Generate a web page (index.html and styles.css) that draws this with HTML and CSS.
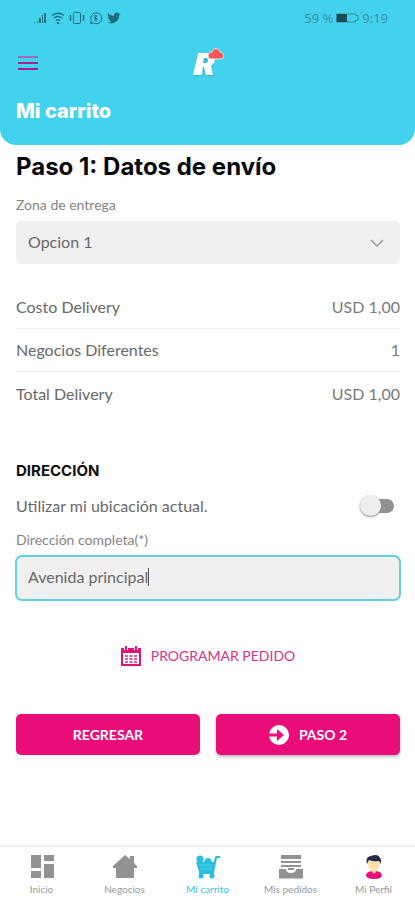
FILE: index.html
```html
<!DOCTYPE html>
<html lang="es">
<head>
<meta charset="utf-8">
<meta name="viewport" content="width=device-width, initial-scale=1">
<title>Mi carrito</title>
<link rel="stylesheet" href="styles.css">
</head>
<body>
<div class="app">
  <header class="header">
    <div class="status">
      <div class="status-icons">
        <svg width="14" height="14" viewBox="0 0 14 14" fill="currentColor"><path d="M1 11h1v1H1zM4 10h1v2H4zM6 7h2v5H6zM9 4h1v8H9zM11 2h2v10h-2z"/></svg>
        <svg width="14" height="14" viewBox="0 0 14 14" fill="none" stroke="currentColor"><path d="M1 4.500Q7 0 13 4.500M3 7q4-3 8 0M5 9.500q2-1.500 4 0" stroke-width="1.300"/><path d="M6 11h2v2H6zM10 11h2" fill="currentColor" stroke="none"/></svg>
        <svg width="16" height="14" viewBox="0 0 16 14" fill="none" stroke="currentColor"><rect x="4.500" y="1.500" width="7" height="11" rx="1"/><path d="M1.500 4v6M14.500 4v6" stroke-width="1.500"/></svg>
        <svg width="14" height="14" viewBox="0 0 14 14" fill="none" stroke="currentColor"><path d="M1.500 12.500l.8-3A5.500 5.500 0 1 1 4.500 12z"/><path d="M6 4v6M6 4.500h1.500q1 1-1.500 2.300 3.500.7 1.500 2.700H6"/></svg>
        <svg width="14" height="14" viewBox="0 0 24 24" fill="currentColor"><path d="M23.500 5c-.8.400-1.700.6-2.700.8 1-.6 1.700-1.500 2-2.600-.9.500-1.900.9-3 1.100a4.700 4.700 0 0 0-8 4.300C7.900 8.400 4.400 6.500 2 3.600a4.700 4.700 0 0 0 1.500 6.300c-.8 0-1.500-.2-2.100-.6 0 2.300 1.600 4.200 3.800 4.700-.7.200-1.400.2-2.100.1.600 1.900 2.300 3.200 4.400 3.300A9.500 9.500 0 0 1 .5 19.300C9 24.500 21 19 21 7.400c1-.7 1.800-1.500 2.500-2.400z"/></svg>
      </div>
      <div class="status-info">
        <span>59 %</span>
        <svg width="23" height="10" viewBox="0 0 23 10"><path d="M.5 1h19v1.500H22v5h-2.500V9H.5z" fill="none" stroke="#368ca0"/><path d="M1 1h10v8H1z" fill="#164d57"/></svg>
        <span>9:19</span>
      </div>
    </div>
    <div class="toolbar">
      <button class="menu" type="button" aria-label="Menú">
        <svg width="20" height="16" viewBox="0 0 20 16" stroke-width="2"><path d="M0 2h20" stroke="#9a6fb5"/><path d="M0 8h20M0 14h20" stroke="#a8208e"/></svg>
      </button>
      <svg class="logo" width="34" height="34" viewBox="0 0 34 34" role="img" aria-label="R">
        <path d="M6 8h13q7 1 5 8-1 4-4 5l3 9h-7l-2-8-2 8H2z" fill="#249db5" opacity=".5"/>
        <path d="M7 7h12c6 0 7 10 1 13l2 9h-7l-2-8h-1l-1 8H2zM13 12l-1 5h2q3 0 3-3 0-2-2-2z" fill="#fff" fill-rule="evenodd"/>
        <path d="M17 10c0-3 2-4 4-4 1-5 7-4 8 0 4 0 5 7 1 7H20q-3 0-3-3z" fill="#ff5558" stroke="#d3eef0"/>
      </svg>
    </div>
    <h1 class="title">Mi carrito</h1>
  </header>

  <main class="content">
    <h2 class="step">Paso 1: Datos de envío</h2>
    <label class="label" for="zona">Zona de entrega</label>
    <div class="select-wrap">
      <select class="select" id="zona"><option>Opcion 1</option></select>
      <svg class="chevron" width="14" height="8" viewBox="0 0 14 8" fill="none" stroke="#999" stroke-width="1.500"><path d="M1 1l6 6 6-6"/></svg>
    </div>

    <dl class="costs">
      <div class="cost"><dt>Costo Delivery</dt><dd>USD 1,00</dd></div>
      <div class="cost"><dt>Negocios Diferentes</dt><dd>1</dd></div>
      <div class="cost"><dt>Total Delivery</dt><dd>USD 1,00</dd></div>
    </dl>

    <h3 class="section">DIRECCIÓN</h3>
    <div class="location">
      <label for="ubicacion">Utilizar mi ubicación actual.</label>
      <input class="switch" id="ubicacion" type="checkbox" role="switch">
    </div>
    <label class="label" for="direccion">Dirección completa(*)</label>
    <div class="field">
      <input class="field-input" id="direccion" type="text" value="Avenida principal">
      <span class="caret"></span>
    </div>

    <button class="schedule" type="button">
      <svg width="20" height="20" viewBox="0 0 20 20"><path d="M1 3h18v16H1z" fill="none" stroke="#d91678" stroke-width="2"/><path d="M0 2h20v5H0z" fill="#d91678"/><path d="M5 0v4M15 0v4" stroke="#fff" stroke-width="4"/><path d="M5 0v4M15 0v4" stroke="#d91678" stroke-width="2"/><path d="M4 9h3v2H4zM8.500 9h3v2h-3zM13 9h3v2h-3zM4 12h3v2H4zM8.500 12h3v2h-3zM13 12h3v2h-3zM4 15h3v2H4zM8.500 15h3v2h-3zM13 15h3v2h-3z" fill="#e45c9f"/></svg>
      <span>PROGRAMAR PEDIDO</span>
    </button>

    <div class="actions">
      <button class="btn" type="button">REGRESAR</button>
      <button class="btn btn-raised" type="button">
        <svg width="20" height="20" viewBox="0 0 20 20"><circle cx="10" cy="10" r="10" fill="#fff"/><path d="M0 8.500h8V4l7 6-7 6v-4.500H0z" fill="#e90c79"/></svg>
        <span>PASO 2</span>
      </button>
    </div>
  </main>

  <nav class="tabs">
    <a class="tab" href="#inicio">
      <svg width="24" height="24" viewBox="0 0 24 24" fill="#929292"><path d="M1 0h10v13H1zM14 0h10v6H14zM1 16h10v7H1zM14 9h10v14H14z"/></svg>
      <span>Inicio</span>
    </a>
    <a class="tab" href="#negocios">
      <svg width="24" height="24" viewBox="0 0 24 24" fill="#929292"><path d="M12 0l5 4V1h4v7l3 3v2h-3v10H3V13H0v-2z"/></svg>
      <span>Negocios</span>
    </a>
    <a class="tab tab-active" href="#carrito">
      <svg width="24" height="24" viewBox="0 0 24 24" fill="#27bfdc"><circle cx="4" cy="4" r="3.500"/><path d="M8 7q1-4 4-4t4 4zM0 7h18l1-5q.3-1 1.500-1H24v2h-3l-3 14H3zM3 17h15v2H3z"/><circle cx="5" cy="21" r="2.500"/><circle cx="16" cy="21" r="2.500"/><path d="M3 10h14M4 14h12" stroke="#6cd5e8" stroke-width=".7"/></svg>
      <span>Mi carrito</span>
    </a>
    <a class="tab" href="#pedidos">
      <svg width="24" height="24" viewBox="0 0 24 24" fill="#929292"><path d="M2 0h20v4H2zM2 6h20v2H2zM2 10h20v2H2zM0 14h7q0 4 5 4t5-4h7v9.500H0zM9 13h6v2H9z"/></svg>
      <span>Mis pedidos</span>
    </a>
    <a class="tab" href="#perfil">
      <svg width="24" height="24" viewBox="0 0 24 24"><path d="M4 20q1-4 8-4t8 4q0 4-8 4t-8-4z" fill="#e90c79"/><path d="M10 13h4v4q-2 3-4 0z" fill="#efc994"/><ellipse cx="12" cy="9" rx="6" ry="7" fill="#ffe1ad"/><path d="M5 9Q3 2 9 1q8-3 10 4v4l-2-3q-6 1-10-1z" fill="#252b4d"/></svg>
      <span>Mi Perfil</span>
    </a>
  </nav>
</div>
</body>
</html>
```
FILE: styles.css
```css
* { box-sizing: border-box; }
body {
  margin: 0;
  background: #fefefe;
  color: #686868;
  font: 16px/20px Lato, "Open Sans", sans-serif;
}
h1, h2, h3, dl, dd { margin: 0; }
button, input, select { font: inherit; color: inherit; }
button { border: 0; background: none; padding: 0; cursor: pointer; }
svg { display: block; flex: none; }

.app { min-height: 100vh; display: flex; flex-direction: column; }

.header {
  background: #43d2ed;
  border-radius: 0 0 16px 16px;
  padding: 8px 16px 20px;
}
.status {
  display: flex;
  align-items: center;
  justify-content: space-between;
  padding: 0 11px 0 17px;
  height: 20px;
  color: #206f80;
}
.status-icons { display: flex; gap: 4px; }
.status-info {
  display: flex;
  align-items: center;
  gap: 3px;
  color: #368ca0;
  font: 13px/20px "Open Sans", sans-serif;
}
.toolbar {
  display: grid;
  grid-template-columns: 1fr auto 1fr;
  align-items: center;
  margin-top: 18px;
  height: 34px;
}
.menu { justify-self: start; padding: 2px; }
.title {
  margin-top: 17px;
  color: #fff;
  font: 800 20px/28px Inter, sans-serif;
}

.content { flex: 1; padding: 6px 15px 0 16px; }
.step {
  color: #080808;
  font: 700 24px/32px Inter, sans-serif;
}
.label {
  display: block;
  margin-top: 12px;
  color: #858585;
  font-size: 14px;
}
.select-wrap {
  display: grid;
  align-items: center;
  margin-top: 6px;
}
.select, .chevron { grid-area: 1 / 1; }
.select {
  appearance: none;
  width: 100%;
  height: 43px;
  border: 0;
  border-radius: 6px;
  padding: 0 36px 2px 12px;
  background: #f0f0f0;
}
.chevron { justify-self: end; margin-right: 16px; pointer-events: none; }

.costs { margin-top: 22px; }
.cost {
  display: flex;
  align-items: center;
  justify-content: space-between;
  height: 43px;
  border-bottom: 1px solid #ececec;
}
.cost:last-child { border: 0; }
.cost dd { color: #7a7a7a; }

.section {
  margin-top: 46px;
  color: #111;
  font: 700 15px/20px Inter, sans-serif;
}
.location {
  display: flex;
  align-items: center;
  justify-content: space-between;
  margin-top: 13px;
  height: 24px;
  padding-right: 6px;
}
.switch {
  appearance: none;
  position: relative;
  width: 32px;
  height: 14px;
  margin: 0;
  border-radius: 7px;
  background: #929292;
}
.switch::before {
  content: "";
  position: absolute;
  left: -2px;
  top: -4px;
  width: 21px;
  height: 21px;
  border-radius: 50%;
  background: #eee;
  box-shadow: 0 1px 2px #888;
}
.location + .label { margin-top: 12px; }
.field {
  display: flex;
  align-items: center;
  height: 46px;
  margin: 5px -1px 0;
  padding: 0 11px 2px;
  border: 2px solid #63d0df;
  border-radius: 7px;
  background: #f0f0f0;
}
.field-input {
  field-sizing: content;
  border: 0;
  outline: 0;
  padding: 0;
  background: none;
}
.caret { width: 1px; height: 18px; background: #555; }

.schedule {
  display: flex;
  align-items: center;
  gap: 10px;
  margin: 45px auto 0;
  color: #d93383;
  font: 14px/20px Lato, sans-serif;
}
.actions {
  display: grid;
  grid-template-columns: 1fr 1fr;
  gap: 16px;
  margin-top: 48px;
}
.btn {
  display: flex;
  align-items: center;
  justify-content: center;
  gap: 10px;
  height: 41px;
  border-radius: 5px;
  background: #e90c79;
  color: #fff;
  font: 700 14px/20px Lato, sans-serif;
}
.btn-raised { box-shadow: 0 2px 3px #bbb; }

.tabs {
  display: grid;
  grid-template-columns: repeat(5, 1fr);
  height: 55px;
  border-top: 2px solid #efefef;
}
.tab {
  display: flex;
  flex-direction: column;
  align-items: center;
  gap: 4px;
  padding-top: 8px;
  color: #999;
  font-size: 10px;
  line-height: 12px;
  text-decoration: none;
}
.tab-active { color: #35c6df; }
```
